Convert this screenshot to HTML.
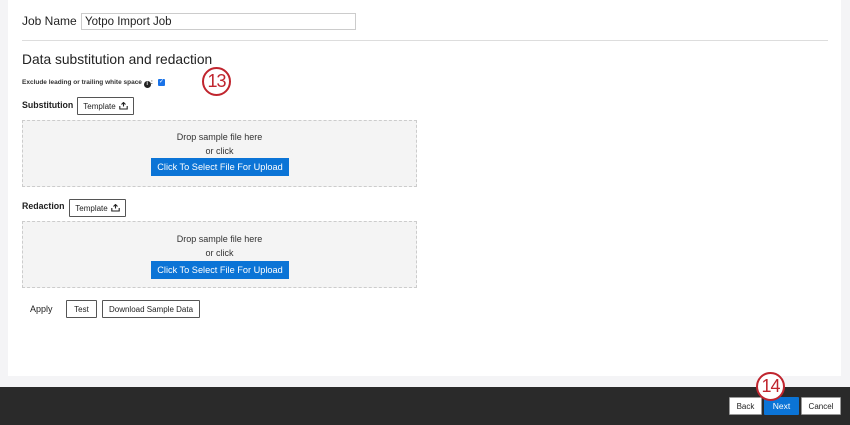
<!DOCTYPE html>
<html><head><meta charset="utf-8"><style>
*{box-sizing:border-box;margin:0;padding:0}
body{width:850px;height:425px;background:#f4f4f6;font-family:"Liberation Sans",sans-serif;color:#222;position:relative;overflow:hidden}
.a{position:absolute;white-space:nowrap}
.panel{left:8px;top:0;width:833px;height:376px;background:#fff}
.btn{position:absolute;border:1px solid #555;background:#fff;font-size:8px;color:#222;display:flex;align-items:center;justify-content:center;border-radius:1px;white-space:nowrap}
.drop{position:absolute;left:22px;width:395px;height:67px;background:#f4f4f4;border:1px dashed #ccc}
.drop .t{position:absolute;width:100%;text-align:center;font-size:9px;color:#333}
.up{position:absolute;left:128px;width:138px;height:18px;background:#0b74d6;color:#fff;font-size:9.2px;display:flex;align-items:center;justify-content:center;white-space:nowrap}
.circ{position:absolute;width:29px;height:29px;border:2.5px solid #c0252e;border-radius:50%;background:#fff;color:#c0252e;font-size:18px;display:flex;align-items:center;justify-content:center;letter-spacing:-1px}
.foot{left:0;top:387px;width:850px;height:38px;background:#2a2a2a}
svg{margin-left:3px}
</style></head><body>
<div class="a panel"></div>
<div class="a" style="left:22px;top:14px;font-size:12px">Job Name</div>
<div class="a" style="left:81px;top:13px;width:275px;height:17px;border:1px solid #ccc;font-size:11.5px;padding-left:3px;line-height:16px">Yotpo Import Job</div>
<div class="a" style="left:22px;top:40px;width:806px;height:1px;background:#ddd"></div>
<div class="a" style="left:22px;top:52px;font-size:13.8px">Data substitution and redaction</div>
<div class="a" style="left:22px;top:79px;font-size:6.5px;font-weight:bold;color:#333">Exclude leading or trailing white space <span style="display:inline-block;width:7px;height:7px;border-radius:50%;background:#222;color:#fff;font-size:5px;text-align:center;line-height:7px;vertical-align:-1px">i</span>:</div>
<div class="a" style="left:158px;top:79px;width:7px;height:7px;background:#1a73e8;border-radius:1px;color:#fff;font-size:6px;line-height:7px;text-align:center">✓</div>
<div class="circ" style="left:202px;top:67px">13</div>

<div class="a" style="left:22px;top:100px;font-size:8.8px;font-weight:bold">Substitution</div>
<div class="btn" style="left:77px;top:97px;width:57px;height:18px">Template<svg width="9" height="8" viewBox="0 0 9 8"><path d="M4.5 0.5v4M2.5 2.5l2-2 2 2M0.8 4v3h7.4V4" stroke="#222" fill="none" stroke-width="1.1"/></svg></div>
<div class="drop" style="top:120px">
 <div class="t" style="top:11px">Drop sample file here</div>
 <div class="t" style="top:25px">or click</div>
 <div class="up" style="top:37px">Click To Select File For Upload</div>
</div>

<div class="a" style="left:22px;top:201px;font-size:8.8px;font-weight:bold">Redaction</div>
<div class="btn" style="left:69px;top:199px;width:57px;height:18px">Template<svg width="9" height="8" viewBox="0 0 9 8"><path d="M4.5 0.5v4M2.5 2.5l2-2 2 2M0.8 4v3h7.4V4" stroke="#222" fill="none" stroke-width="1.1"/></svg></div>
<div class="drop" style="top:221px">
 <div class="t" style="top:12px">Drop sample file here</div>
 <div class="t" style="top:26px">or click</div>
 <div class="up" style="top:39px">Click To Select File For Upload</div>
</div>

<div class="a" style="left:30px;top:304px;font-size:9px">Apply</div>
<div class="btn" style="left:66px;top:300px;width:31px;height:18px">Test</div>
<div class="btn" style="left:102px;top:300px;width:98px;height:18px">Download Sample Data</div>

<div class="a foot"></div>
<div class="btn" style="left:729px;top:397px;width:33px;height:18px;border-color:#999">Back</div>
<div class="btn" style="left:764px;top:397px;width:35px;height:18px;background:#0b74d6;color:#fff;border-color:#0b74d6;font-size:8.5px">Next</div>
<div class="btn" style="left:801px;top:397px;width:40px;height:18px;border-color:#999">Cancel</div>
<div class="circ" style="left:756px;top:372px">14</div>
</body></html>
